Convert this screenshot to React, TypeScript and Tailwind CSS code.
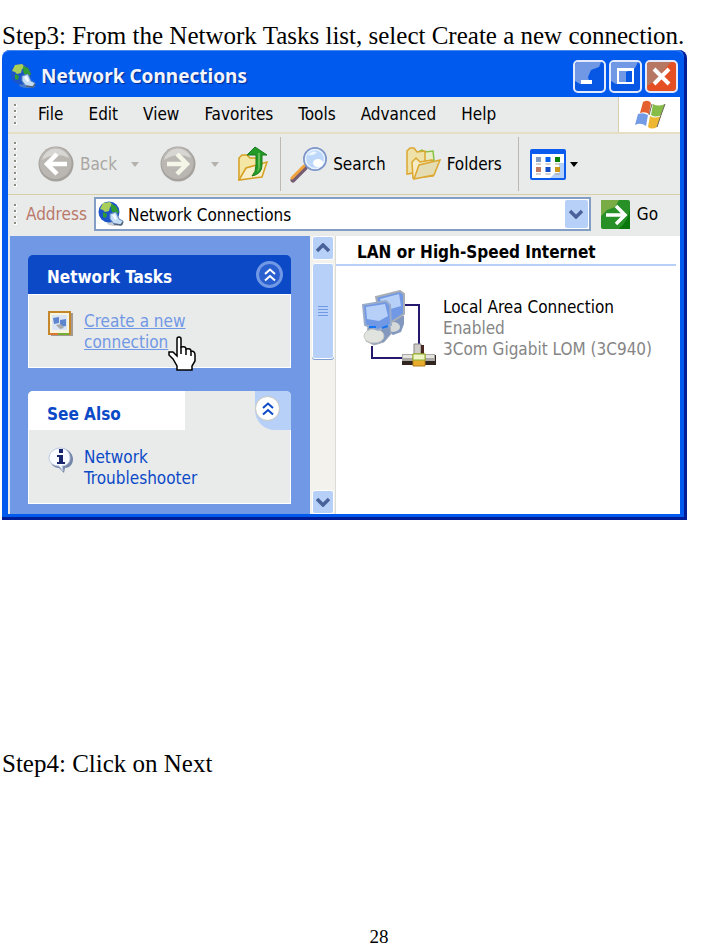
import type { ReactNode } from "react";

const uiFont = "font-['DejaVu_Sans_Condensed','DejaVu_Sans',sans-serif]";

function Grip({ dots }: { dots: number }) {
  return (
    <div className="flex w-[14px] shrink-0 flex-col items-center gap-[3px]">
      {Array.from({ length: dots }, (_, i) => (
        <span key={i} className="h-[3px] w-[3px] border-r border-b border-white bg-[#8f8c86]" />
      ))}
    </div>
  );
}

function GlobeIcon({ size }: { size: number }) {
  return (
    <svg width={size} height={size} viewBox="0 0 26 26" aria-hidden="true">
      <ellipse cx="17" cy="22" rx="8" ry="3" fill="#8f9aa8" opacity=".5" />
      <circle cx="11" cy="11" r="10.500" fill="#1b55c8" />
      <path d="M2 8 5 2l7-1 3 3-3 2-1 4-4 1-2-2z" fill="#a9cf5a" />
      <path d="m13 3 5 2 3 6-3 3-4-3-1-4zM5 11l4 2-1 4-3-1z" fill="#2f9b35" />
      <path d="m12 13 6-2 3 7 4 2-1 4-8-1-4-5z" fill="#c4ddf5" stroke="#5d87c2" />
      <path d="m14 14 3-1 2 5-2 1z" fill="#f5faff" />
      <path d="m16 23 7 1 2-3" fill="none" stroke="#55647b" strokeWidth="1.5" />
    </svg>
  );
}

function RoundArrow({ flip }: { flip?: boolean }) {
  return (
    <svg width="36" height="36" viewBox="0 0 36 36" className="shrink-0" aria-hidden="true">
      <circle cx="18" cy="18" r="17.5" fill="#a5a29e" />
      <circle cx="17.5" cy="17" r="16" fill="#bab7b3" />
      <path d="M4 14a14 14 0 0 1 27-2q-13-7-27 2z" fill="#d8d6d2" />
      <path
        d={flip ? "M7 18h19M17 8l10 10-10 10" : "M29 18H10M19 8 9 18l10 10"}
        fill="none"
        stroke={flip ? "#f5f5e8" : "#fff"}
        strokeWidth="4.5"
      />
    </svg>
  );
}

function Caret({ className }: { className: string }) {
  return (
    <svg width="8" height="5" viewBox="0 0 10 6" className={className} aria-hidden="true">
      <path d="M0 0h10L5 6z" fill="currentColor" />
    </svg>
  );
}

function UpFolderIcon() {
  return (
    <svg width="30" height="36" viewBox="0 0 30 36" className="shrink-0" aria-hidden="true">
      <path d="M1 34V12l3-3h5l3 3h7v5" fill="#f4e6a5" stroke="#d5a021" strokeWidth="1.5" />
      <path d="m1 34 7-12 21-6-5 15z" fill="#f7eecb" stroke="#d5a021" strokeWidth="1.5" />
      <path d="M9 9 17 1l12 8h-5v10q0 9-10 11 4-4 4-11V9z" fill="#249a27" stroke="#187a1b" />
      <path d="M20 7h2v13q0 4-3 6 2-4 1-9z" fill="#62bd55" />
    </svg>
  );
}

function SearchIcon() {
  return (
    <svg width="37" height="37" viewBox="0 0 37 37" className="shrink-0" aria-hidden="true">
      <path d="m3 34 12-12" stroke="#765c72" strokeWidth="5" strokeLinecap="round" />
      <path d="m2 32 12-12" stroke="#f0a23c" strokeWidth="3" strokeLinecap="round" />
      <circle cx="25" cy="13" r="11" fill="#bdd8fa" stroke="#7f96c9" strokeWidth="2" />
      <circle cx="25" cy="13" r="9.5" fill="none" stroke="#e8f3ff" strokeWidth="1.5" />
      <ellipse cx="28" cy="17" rx="5" ry="4" fill="#fff" />
      <path d="M18 9q4-5 9-3-3 4-9 3z" fill="#eef7ff" />
    </svg>
  );
}

function FoldersIcon() {
  return (
    <svg width="36" height="34" viewBox="0 0 36 34" className="shrink-0" aria-hidden="true">
      <path d="m13 5 4-2 3 2 8-1 1 9-12 8z" fill="#e9edc4" stroke="#88c142" strokeWidth="1.5" />
      <path d="M2 27V4l3-3h4l3 4 8-1v20z" fill="#efe2a8" stroke="#dca730" strokeWidth="1.5" />
      <path d="m8 31-1-16 4-4 4 4 12-2 1 16z" fill="#f6edc6" stroke="#dca730" strokeWidth="1.5" />
      <path d="m9 32 5-14 21-5-6 15z" fill="#e4dcb2" stroke="#dca730" strokeWidth="1.5" />
    </svg>
  );
}

function ViewsIcon() {
  const colors = ["#7f9bc2", "#0560ef", "#078007", "#bf7963", "#124cc8", "#cf9818"];
  return (
    <svg width="36" height="31" viewBox="0 0 36 31" aria-hidden="true">
      <rect x="1" y="1" width="34" height="29" rx="1" fill="#fff" stroke="#0b5cec" strokeWidth="2" />
      <path d="M1 1h34v4H1z" fill="#0b5cec" />
      <path d="m20 29 5-5h4V14h5v15z" fill="#b5d0f8" />
      {colors.map((c, i) => (
        <g key={c}>
          <rect x={6 + (i % 3) * 9.5} y={i < 3 ? 8 : 18} width="5" height="5" fill={c} />
          <rect x={6 + (i % 3) * 9.5} y={i < 3 ? 14.5 : 24.5} width="5" height="1" fill="#a9a49b" />
        </g>
      ))}
    </svg>
  );
}

function WindowsFlag() {
  return (
    <svg width="32" height="30" viewBox="0 0 32 30" aria-hidden="true">
      <path d="M9 2q5-3 8 1l-2 11q-4-3-9-1z" fill="#e5602f" />
      <path d="M19 4q5 3 12 0l-4 11q-5 3-10 0z" fill="#86bd48" />
      <path d="M4 14q5-2 10 1l-2 11q-5-4-11-1z" fill="#739be6" />
      <path d="M16 16q5 3 11 0l-4 11q-5 3-9 0z" fill="#edb731" />
      <path d="m18 4-3 11m16-11-4 11-4 12" fill="none" stroke="#6b675a" strokeWidth="1" />
    </svg>
  );
}

function CaptionButton({ label, tone, children }: { label: string; tone: string; children: ReactNode }) {
  return (
    <button
      type="button"
      aria-label={label}
      className={`h-[33px] w-[33px] overflow-hidden rounded-[5px] border-2 border-[#e3eafb] ${tone}`}
    >
      <svg width="29" height="29" viewBox="0 0 29 29" aria-hidden="true">
        {children}
      </svg>
    </button>
  );
}

function ScrollButton({ down, label }: { down?: boolean; label: string }) {
  return (
    <button
      type="button"
      aria-label={label}
      className="flex h-[24px] w-[22px] shrink-0 items-center justify-center rounded-[3px] border border-white bg-[#b7d0f8]"
    >
      <svg width="14" height="10" viewBox="0 0 14 10" aria-hidden="true">
        <path d={down ? "m1 2 6 6 6-6" : "m1 8 6-6 6 6"} fill="none" stroke="#49639a" strokeWidth="3.5" />
      </svg>
    </button>
  );
}

function Chevrons({ className }: { className: string }) {
  return (
    <svg width="12" height="14" viewBox="0 0 12 14" className={className} aria-hidden="true">
      <path d="m1 6 5-4.5L11 6M1 12.500l5-4.500 5 4.500" fill="none" stroke="currentColor" strokeWidth="2" />
    </svg>
  );
}

function WizardIcon() {
  return (
    <svg width="25" height="26" viewBox="0 0 25 26" className="shrink-0" aria-hidden="true">
      <path d="M3 2h22v23H3z" fill="#a49a91" />
      <rect x="1" y="1" width="21" height="22" fill="#f7f4df" stroke="#c4872c" strokeWidth="2" />
      <path d="M4 4h15v15H4z" fill="#dbe5f4" />
      <path d="m5 7 6-1v6l-5 1zm7 2 6-1v7l-6 1z" fill="#5d86cf" />
      <path d="m8 14 5-1 3 4-4 1z" fill="#a7a9ab" />
      <path d="M10 23h11" stroke="#73ad31" strokeWidth="2" />
      <path d="M2 23h8" stroke="#d97931" strokeWidth="2" />
    </svg>
  );
}

function InfoIcon() {
  return (
    <svg width="26" height="27" viewBox="0 0 26 27" className="shrink-0" aria-hidden="true">
      <path d="M25 12c0 6-4 9-8 9l-1 5-5-5C6 21 2 17 2 12S7 1 13 1s12 5 12 11z" fill="#7486a9" />
      <path d="M22 11c0 5-4 8-8 8l1 5-4-5C6 19 1 16 1 11S6 1 12 1s10 4 10 10z" fill="#f8fbff" stroke="#bfcbe0" />
      <path d="M11 2h4v4h-4zM9 8h6v7h2v2H9v-2h2v-5H9z" fill="#18276d" />
    </svg>
  );
}

function LanIcon() {
  return (
    <svg width="76" height="78" viewBox="0 0 76 78" className="shrink-0" aria-hidden="true">
      <path d="M42 15h15v40M10 56v12h30" fill="none" stroke="#25196f" strokeWidth="2" />
      <path d="M34 26h8v8l-3 8-8 3-8-5z" fill="#8298bf" />
      <ellipse cx="31" cy="37" rx="7" ry="5" fill="#d4d8d9" />
      <path d="m14 7 24-6 4 3v20l-14 9-11-13z" fill="#7198e5" stroke="#a9aeb4" strokeWidth="2" />
      <path d="m18 9 19-5 2 12-17 5z" fill="#b7d0f8" />
      <path d="M6 36h22l1 8-7 8-10 3-8-4z" fill="#8298bf" stroke="#aab0b9" />
      <ellipse cx="12" cy="46" rx="10" ry="7" fill="#e1e3df" stroke="#c8c8c4" />
      <path d="m1 15 23-4 4 4 1 20-13 5-13-5z" fill="#7198e5" stroke="#9aaccb" strokeWidth="2" />
      <path d="m4 17 19-3 3 12-9 5-12-2z" fill="#b7d0f8" />
      <path d="M7 37h7M20 38l6-2" stroke="#1674ee" strokeWidth="2" />
      <path d="M52 54h7v13h-7z" fill="#d0cdc8" stroke="#888" />
      <path d="M59 55h3v11h-3z" fill="#4b2922" />
      <path d="M40 65h34v10H40z" fill="#30251f" />
      <path d="M40 64h33v7H40z" fill="#aaa9a6" />
      <path d="M41 65h31v3H41z" fill="#e4e3df" />
      <path d="M51 64h12v12H51z" fill="#e9ad2e" stroke="#b67e19" />
      <path d="M51 64h12v6H51z" fill="#f0f3c5" stroke="#89b52e" />
    </svg>
  );
}

function HandPointer() {
  return (
    <svg
      width="28"
      height="36"
      viewBox="0 0 28 36"
      className="pointer-events-none absolute top-[42px] left-[140px]"
      aria-hidden="true"
    >
      <path
        d="M9 20V3q0-2 2-2t2 2v8q5-1 5 2 5-1 5 2 4 0 4 4v6l-3 5v4H9v-4l-4-7-4-4v-3h4z"
        fill="#fff"
        stroke="#000"
        strokeWidth="1.500"
      />
      <path d="M13 11v7m5-5v6m5-4v5" stroke="#000" strokeWidth="1.500" />
    </svg>
  );
}

const menus = ["File", "Edit", "View", "Favorites", "Tools", "Advanced", "Help"];

export default function App() {
  return (
    <main className="bg-white pt-[22px] pl-[2px] font-['Liberation_Serif',serif] text-[25px] leading-[28px] text-black">
      <p className="whitespace-nowrap">Step3: From the Network Tasks list, select Create a new connection.</p>

      <section
        className={`mr-[34px] rounded-t-[8px] border-r-[3px] border-b-[3px] border-[#001c97] bg-[#005aee] text-[17px] leading-[21px] ${uiFont}`}
      >
        <header className="flex h-[47px] items-center rounded-t-[8px] border-t border-[#4b86ed] pt-[4px] pr-[6px] pl-[8px]">
          <GlobeIcon size={26} />
          <h1 className="ml-[5px] flex-1 font-['Noto_Sans','Open_Sans',sans-serif] text-[19px] font-bold text-[#f2f5fd] [text-shadow:1px_1px_1px_#002b91]">
            Network Connections
          </h1>
          <div className="flex gap-[3px]">
            <CaptionButton label="Minimize" tone="bg-[#0757e4]">
              <path d="M0 0h26l-2 5-8 3-3 7 2 7H5L0 19z" fill="#7198e5" />
              <path d="M6 18h11v4H6z" fill="#fff" />
            </CaptionButton>
            <CaptionButton label="Maximize" tone="bg-[#0757e4]">
              <path d="M0 0h27l-3 6-9 4v12H5L0 19z" fill="#7198e5" />
              <path d="M7 7h15v14H7zM6 8h17" fill="none" stroke="#fff" strokeWidth="2" />
            </CaptionButton>
            <CaptionButton label="Close" tone="bg-[#e45024]">
              <path d="M0 0h24l-6 7-9 11-9 6z" fill="#b77863" />
              <path d="m7 7 15 15M22 7 7 22" stroke="#fff" strokeWidth="4" />
            </CaptionButton>
          </div>
        </header>

        <div className="mr-[4px] mb-[3px] ml-[6px] bg-[#e9ebea]">
          <nav className="flex h-[37px] border-b-2 border-[#e7dfc4]">
            <div className="flex flex-1 items-center border-r border-[#d8cfb0]">
              <Grip dots={4} />
              <div className="ml-[16px] flex gap-[25px]">
                {menus.map((m) => (
                  <button key={m} type="button">
                    {m}
                  </button>
                ))}
              </div>
            </div>
            <div className="flex w-[61px] items-center justify-center bg-white">
              <WindowsFlag />
            </div>
          </nav>

          <div className="flex h-[61px] items-center border-b border-[#d8cfa8]">
            <Grip dots={8} />
            <button type="button" className="ml-[16px] flex items-center gap-[6px] text-[#aaa7a2]">
              <RoundArrow />
              Back
            </button>
            <Caret className="ml-[14px] text-[#b5b2ad]" />
            <button type="button" aria-label="Forward" className="ml-[21px]">
              <RoundArrow flip />
            </button>
            <Caret className="ml-[15px] text-[#b5b2ad]" />
            <button type="button" aria-label="Up" className="ml-[19px]">
              <UpFolderIcon />
            </button>
            <span className="ml-[12px] h-[54px] w-px bg-[#bdb9b5]" />
            <button type="button" className="ml-[9px] flex items-center gap-[6px]">
              <SearchIcon />
              Search
            </button>
            <button type="button" className="ml-[19px] flex items-center gap-[6px]">
              <FoldersIcon />
              Folders
            </button>
            <span className="ml-[16px] h-[54px] w-px bg-[#bdb9b5]" />
            <button type="button" aria-label="Views" className="ml-[11px] flex items-center gap-[4px]">
              <ViewsIcon />
              <Caret className="text-black" />
            </button>
          </div>

          <form className="flex h-[41px] items-center pb-[3px]">
            <Grip dots={4} />
            <label htmlFor="address" className="ml-[4px] w-[68px] text-[#b9796a]">
              Address
            </label>
            <div className="flex h-[34px] flex-1 items-center border-2 border-[#829ec4] bg-white pr-px pl-[2px]">
              <GlobeIcon size={26} />
              <input
                id="address"
                defaultValue="Network Connections"
                className="ml-[4px] min-w-0 flex-1 bg-transparent pt-[2px] outline-none"
              />
              <button
                type="button"
                aria-label="Show addresses"
                className="flex h-[28px] w-[23px] items-center justify-center rounded-[2px] bg-[#b7d0f8]"
              >
                <svg width="14" height="10" viewBox="0 0 14 10" aria-hidden="true">
                  <path d="m1 2 6 6 6-6" fill="none" stroke="#49639a" strokeWidth="3.500" />
                </svg>
              </button>
            </div>
            <button type="button" className="mr-[22px] ml-[10px] flex items-center gap-[7px]">
              <svg width="29" height="29" viewBox="0 0 29 29" aria-hidden="true">
                <rect width="29" height="29" rx="2" fill="#279127" />
                <path d="M0 0h18l-4 7-8 3-6 6z" fill="#7aac45" />
                <path d="M18 29q10-9 11-21v21z" fill="#08780d" />
                <path d="M5 15h18M15 6l9 9-9 9" fill="none" stroke="#fff" strokeWidth="3.500" />
              </svg>
              Go
            </button>
          </form>

          <div className="flex h-[278px]">
            <aside className="ml-[2px] w-[300px] shrink-0 bg-[#7198e5] pt-[19px] pr-[19px] pl-[18px]">
              <section className="relative">
                <header className="flex h-[39px] items-center justify-between rounded-t-[5px] bg-[#0c49c7] pr-[8px] pl-[19px]">
                  <h2 className="pt-[6px] font-bold text-white">Network Tasks</h2>
                  <button
                    type="button"
                    aria-label="Collapse Network Tasks"
                    className="flex h-[27px] w-[27px] items-center justify-center rounded-full border-[3px] border-[#7198e5] bg-[#2a5fd0]"
                  >
                    <Chevrons className="text-white" />
                  </button>
                </header>
                <div className="flex h-[74px] gap-[11px] border border-white bg-[#e9ebea] pt-[16px] pl-[19px]">
                  <WizardIcon />
                  <a href="#create" className="w-[120px] text-[#7198e5] underline">
                    Create a new connection
                  </a>
                </div>
                <div className="absolute top-[39px] left-0">
                  <HandPointer />
                </div>
              </section>

              <section className="mt-[23px]">
                <header className="flex h-[39px] justify-between rounded-t-[5px] bg-[#e9ebea]">
                  <h2 className="w-[157px] rounded-tl-[5px] bg-white pt-[13px] pl-[19px] font-bold text-[#0c49c7]">
                    See Also
                  </h2>
                  <div className="w-[36px] rounded-tr-[5px] rounded-bl-[20px] bg-[#b7d0f8] pt-[5px]">
                    <button
                      type="button"
                      aria-label="Collapse See Also"
                      className="flex h-[25px] w-[25px] items-center justify-center rounded-full border border-[#c8c5c0] bg-white"
                    >
                      <Chevrons className="text-[#0c49c7]" />
                    </button>
                  </div>
                </header>
                <div className="flex h-[74px] gap-[10px] border border-t-0 border-white bg-[#e9ebea] pt-[17px] pl-[19px]">
                  <InfoIcon />
                  <a href="#troubleshooter" className="w-[130px] text-[#0c49c7]">
                    Network Troubleshooter
                  </a>
                </div>
              </section>
            </aside>

            <div className="flex w-[26px] shrink-0 flex-col items-center border-r border-[#dcdcd6] bg-[#f3f2ec]">
              <ScrollButton label="Scroll up" />
              <div className="mt-[3px] flex h-[96px] w-[22px] flex-col items-center justify-center gap-[2px] rounded-[3px] border border-[#fff] bg-[#b7d0f8] shadow-[0_1px_0_#7f9ed1]">
                {[0, 1, 2, 3].map((n) => (
                  <span key={n} className="h-px w-[10px] bg-[#7198e5]" />
                ))}
              </div>
              <div className="flex-1" />
              <ScrollButton label="Scroll down" down />
            </div>

            <section className="min-w-0 flex-1 bg-white">
              <h2 className="mr-[4px] h-[30px] border-b-2 border-[#b7d0f8] pt-[6px] pl-[21px] font-bold">
                LAN or High-Speed Internet
              </h2>
              <div className="flex gap-[5px] pt-[24px] pl-[26px]">
                <LanIcon />
                <div className="pt-[7px] whitespace-nowrap text-[#858585]">
                  <p className="text-black">Local Area Connection</p>
                  <p>Enabled</p>
                  <p>3Com Gigabit LOM (3C940)</p>
                </div>
              </div>
            </section>
          </div>
        </div>
      </section>

      <p className="mt-[230px]">Step4: Click on Next</p>
      <footer className="mt-[148px] mr-[34px] pl-[69px] text-center text-[19px] leading-[22px]">28</footer>
    </main>
  );
}
